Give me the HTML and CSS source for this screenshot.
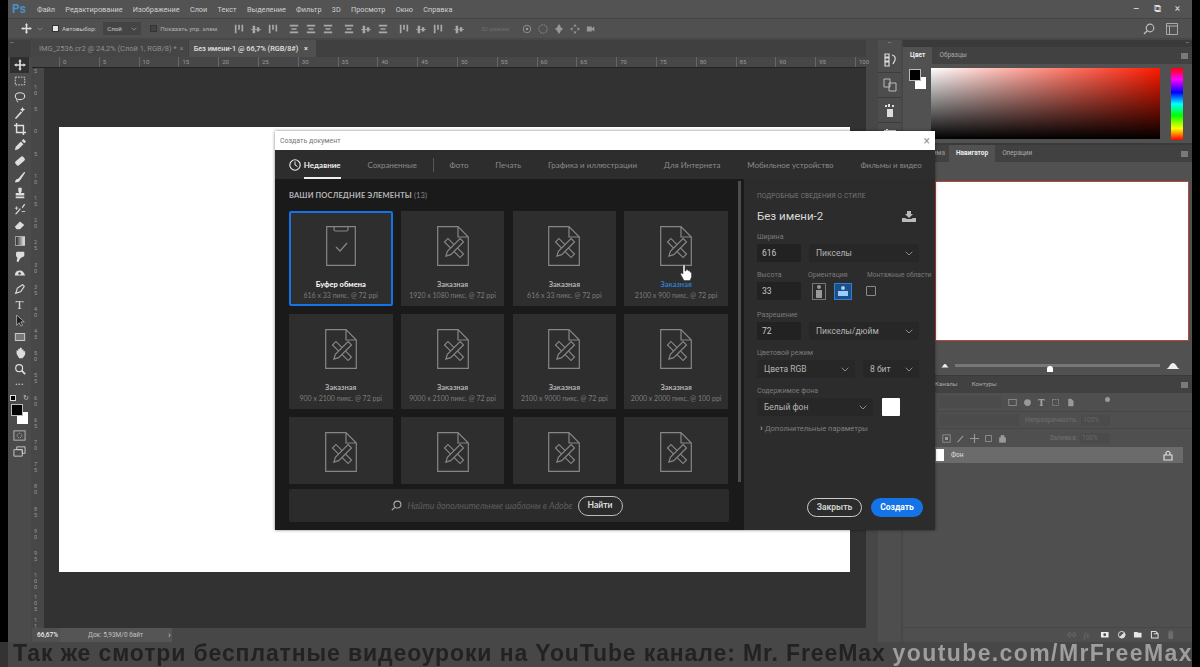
FILE: index.html
```html
<!DOCTYPE html>
<html lang="ru">
<head>
    <meta charset="UTF-8">
    <meta name="viewport" content="width=device-width, initial-scale=1.0">
    <title>Photoshop - Создать документ</title>
    <link rel="stylesheet" href="styles.css">
</head>
<body>
    <svg class="defs" width="0" height="0">
        <symbol id="file-x" viewBox="0 0 32 40">
            <path d="M.7.7H21L31.3 11V39.3H.7ZM21 .7V11H31.3" fill="none" stroke="currentColor" stroke-width="1.2"/>
            <g fill="none" stroke="currentColor" stroke-width="1.2">
                <rect x="14.6" y="11" width="4.8" height="22" transform="rotate(-45 17 22)"/>
                <path d="M14.6 11H19.4V29L17 33.5L14.6 29Z" transform="rotate(45 17 22)" fill="#2e2e2e"/>
            </g>
        </symbol>
        <symbol id="clip" viewBox="0 0 30 40">
            <path d="M.7.7H29.3V39.3H.7ZM8 .7V3.5Q8 5 9.5 5H20.5Q22 5 22 3.5V.7" fill="none" stroke="currentColor" stroke-width="1.2"/>
            <path d="M10 21L14 25L21 17" fill="none" stroke="currentColor" stroke-width="1.2"/>
        </symbol>
        <symbol id="chev" viewBox="0 0 8 5">
            <path d="M.7.7L4 4L7.3.7" fill="none" stroke="currentColor" stroke-width="1"/>
        </symbol>
        <symbol id="al-v" viewBox="0 0 12 12">
            <path d="M1 1H3V11H1ZM5 1H7V7H5ZM9 1H11V9H9Z" fill="currentColor"/>
        </symbol>
        <symbol id="al-h" viewBox="0 0 12 12">
            <path d="M1 1H11V3H1ZM3 5H9V7H3ZM1 9H11V11H1Z" fill="currentColor"/>
        </symbol>
        <symbol id="al-c" viewBox="0 0 12 12">
            <path d="M0 6H12V7H0ZM2 2H5V11H2ZM7 4H10V9H7Z" fill="currentColor"/>
        </symbol>
        <symbol id="mount" viewBox="0 0 14 7">
            <path d="M0 7Q2 7 4 3Q7-1 10 3Q12 7 14 7Z" fill="currentColor"/>
        </symbol>
    </svg>

    <div class="screen">
        <header class="menubar">
            <span class="ps-logo">Ps</span>
            <nav class="menu">
                <span>Файл</span><span>Редактирование</span><span>Изображение</span><span>Слои</span><span>Текст</span><span>Выделение</span><span>Фильтр</span><span>3D</span><span>Просмотр</span><span>Окно</span><span>Справка</span>
            </nav>
            <div class="win-ctrl">
                <span>&#8211;</span><span>&#10697;</span><span>&#215;</span>
            </div>
        </header>

        <div class="optbar">
            <svg class="opt-move" width="14" height="14" viewBox="0 0 14 14"><path d="M7 0L9 3H8V6H11V5L14 7L11 9V8H8V11H9L7 14L5 11H6V8H3V9L0 7L3 5V6H6V3H5Z" fill="#ddd"/></svg>
            <svg class="opt-chev"><use href="#chev"/></svg>
            <span class="check on"></span>
            <span class="opt-label">Автовыбор:</span>
            <span class="opt-select">Слой <svg class="opt-chev"><use href="#chev"/></svg></span>
            <span class="check"></span>
            <span class="opt-label dim">Показать упр. элем.</span>
            <div class="opt-icons first">
                <svg><use href="#al-v"/></svg><svg><use href="#al-c"/></svg><svg><use href="#al-v"/></svg>
            </div>
            <div class="opt-icons">
                <svg><use href="#al-h"/></svg><svg><use href="#al-h"/></svg><svg><use href="#al-h"/></svg>
            </div>
            <div class="opt-icons">
                <svg><use href="#al-h"/></svg><svg><use href="#al-c"/></svg><svg><use href="#al-h"/></svg>
            </div>
            <div class="opt-icons">
                <svg><use href="#al-v"/></svg><svg><use href="#al-c"/></svg><svg><use href="#al-v"/></svg>
            </div>
            <div class="opt-icons">
                <svg><use href="#al-c"/></svg>
            </div>
            <span class="opt-3d">3D-режим:</span>
            <div class="opt-icons three">
                <svg viewBox="0 0 12 12"><circle cx="6" cy="6" r="4.5" fill="none" stroke="currentColor"/><circle cx="6" cy="6" r="1.5" fill="currentColor"/></svg>
                <svg viewBox="0 0 12 12"><circle cx="6" cy="6" r="5" fill="none" stroke="currentColor" stroke-dasharray="2 1"/></svg>
                <svg viewBox="0 0 12 12"><path d="M6 0L8 3V9L6 12L4 9V3ZM1 6L4 4V8ZM11 6L8 4V8Z" fill="currentColor"/></svg>
                <svg viewBox="0 0 12 12"><path d="M6 0L8 3H4ZM6 12L4 9H8ZM0 6L3 4V8ZM12 6L9 4V8Z" fill="currentColor"/></svg>
                <svg viewBox="0 0 12 12"><path d="M1 3H7V9H1ZM7 5L10 3V9L7 7Z" fill="currentColor"/></svg>
            </div>
            <div class="opt-right">
                <svg width="12" height="12" viewBox="0 0 12 12"><circle cx="7" cy="5" r="3.8" fill="none" stroke="#bbb" stroke-width="1.2"/><path d="M4 8L1 11" stroke="#bbb" stroke-width="1.4"/></svg>
                <svg width="12" height="12" viewBox="0 0 12 12"><path d="M.5.5H11.5V11.5H.5ZM.5 3H11.5M3.5 3V11.5" fill="none" stroke="#aaa"/></svg>
            </div>
        </div>

        <div class="work">
            <aside class="tools">
                <div class="tools-top">&#8226;&#8226;</div>
                <div class="tool active"><svg viewBox="0 0 14 14"><path d="M7 0L9 3H8V6H11V5L14 7L11 9V8H8V11H9L7 14L5 11H6V8H3V9L0 7L3 5V6H6V3H5Z"/></svg></div>
                <div class="tool"><svg viewBox="0 0 14 14"><rect x="1.5" y="2.5" width="11" height="9" fill="none" stroke="#ddd" stroke-dasharray="2 1.2"/></svg></div>
                <div class="tool"><svg viewBox="0 0 14 14"><ellipse cx="7" cy="6" rx="5.5" ry="4" fill="none" stroke="#ddd" stroke-width="1.3"/><path d="M3 9Q3 13 5 13" fill="none" stroke="#ddd"/></svg></div>
                <div class="tool"><svg viewBox="0 0 14 14"><path d="M1 13L8 5L9.5 6.5L2.5 14Z"/><path d="M10 0L11 2L13 3L11 4L10 6L9 4L7 3L9 2Z"/></svg></div>
                <div class="tool"><svg viewBox="0 0 14 14"><path d="M3 0V11H14M0 3H11V14" fill="none" stroke="#ddd" stroke-width="1.7"/></svg></div>
                <div class="tool"><svg viewBox="0 0 14 14"><path d="M1 13L2 9L8 3L11 6L5 12Z"/><path d="M9 2L11 0L14 3L12 5Z"/></svg></div>
                <div class="tool"><svg viewBox="0 0 14 14"><rect x="1" y="4" width="12" height="6" rx="2" transform="rotate(-40 7 7)"/></svg></div>
                <div class="tool"><svg viewBox="0 0 14 14"><path d="M1 13Q2 9 5 9L12 1L13 2L7 11Q5 14 1 13Z"/></svg></div>
                <div class="tool"><svg viewBox="0 0 14 14"><path d="M5 1H9V5L8 7H12V10H2V7H6L5 5ZM2 11H12V13H2Z"/></svg></div>
                <div class="tool"><svg viewBox="0 0 14 14"><path d="M1 13L7 6L8 7L3 13ZM9 5L12 1L13 2L10 6Z"/><path d="M1 6H5M3 4V8M9 10H13" stroke="#ddd"/></svg></div>
                <div class="tool"><svg viewBox="0 0 14 14"><path d="M1 9L7 3L12 7L7 12H3Z"/></svg></div>
                <div class="tool"><svg viewBox="0 0 14 14"><defs><linearGradient id="grad-t"><stop offset="0" stop-color="#222"/><stop offset="1" stop-color="#eee"/></linearGradient></defs><rect x="1.5" y="2" width="11" height="10" fill="url(#grad-t)" stroke="#ddd" stroke-width=".7"/></svg></div>
                <div class="tool"><svg viewBox="0 0 14 14"><path d="M3 1H12V6Q9 7 7 9L5 13L3 12L4 8Q1 6 3 1Z"/></svg></div>
                <div class="tool"><svg viewBox="0 0 14 14"><path d="M1 10Q1 4 7 4Q11 4 13 10Z"/><circle cx="6.5" cy="7.5" r="1.5" fill="#4a4a4a"/></svg></div>
                <div class="tool"><svg viewBox="0 0 14 14"><path d="M2 12L4 6L10 2L12 4L8 10Z" fill="none" stroke="#ddd" stroke-width="1.3"/></svg></div>
                <div class="tool tool-t">T</div>
                <div class="tool"><svg viewBox="0 0 14 14"><path d="M3 0V12L6 9L8 13L10 12L8 8H12Z" fill="#1d1d1d" stroke="#ddd" stroke-width=".7"/></svg></div>
                <div class="tool"><svg viewBox="0 0 14 14"><rect x="1.5" y="3" width="11" height="8" fill="#777" stroke="#ddd"/></svg></div>
                <div class="tool"><svg viewBox="0 0 14 14"><path d="M3 8V4H5V2H7V1H9V3H11V5H13V9L10 13H6Z"/></svg></div>
                <div class="tool"><svg viewBox="0 0 14 14"><circle cx="6" cy="6" r="4" fill="none" stroke="#ddd" stroke-width="1.4"/><path d="M9 9L13 13" stroke="#ddd" stroke-width="2"/></svg></div>
                <div class="tool tool-dots">&#8226;&#8226;&#8226;</div>
                <div class="swatch-mini"><i></i><b>&#8635;</b></div>
                <div class="swatch-big"><span class="bg"></span><span class="fg"></span></div>
                <div class="tool low"><svg viewBox="0 0 14 14"><rect x="1" y="2" width="12" height="10" fill="none" stroke="#bbb"/><circle cx="7" cy="7" r="2.5" fill="none" stroke="#bbb" stroke-dasharray="1 1"/></svg></div>
                <div class="tool low"><svg viewBox="0 0 14 14"><path d="M4 2H13V9H10V5H4ZM1 5H10V12H1Z" fill="none" stroke="#ccc"/></svg></div>
            </aside>

            <main class="docs">
                <div class="tabs">
                    <span class="tab">IMG_2536.cr2 @ 24,2% (Слой 1, RGB/8) * <i>&#215;</i></span>
                    <span class="tab cur">Без имени-1 @ 66,7% (RGB/8#) <i>&#215;</i></span>
                </div>
                <div class="ruler-top">
                    <span>0</span><span>5</span><span>10</span><span>15</span><span>20</span><span>25</span><span>30</span><span>35</span><span>40</span><span>45</span><span>50</span><span>55</span><span>60</span><span>65</span><span>70</span><span>75</span><span>80</span><span>85</span><span>90</span><span>95</span><span>100</span>
                </div>
                <div class="doc-row">
                    <div class="ruler-left">
                        <span>5</span><span>10</span><span>5</span><span>0</span><span>5</span><span>10</span><span>15</span><span>20</span><span>25</span><span>30</span><span>35</span><span>40</span><span>45</span><span>50</span><span>55</span><span>60</span><span>65</span><span>70</span><span>75</span><span>80</span><span>85</span><span>90</span><span>95</span><span>100</span><span>105</span><span>11</span>
                    </div>
                    <div class="canvas">
                        <div class="page"></div>
                    </div>
                </div>
                <footer class="status">
                    <span class="zoom-val">66,67%</span>
                    <span class="doc-size">Док: 5,93М/0 байт</span>
                    <span class="status-arrow">&#8250;</span>
                </footer>
            </main>

            <aside class="dock">
                <div class="dock-top">&#8226;&#8226;</div>
                <div class="dock-item"><svg viewBox="0 0 14 14"><path d="M2 1H6V4H2ZM2 5H6V8H2ZM2 9H6V13H2ZM9 2Q13 3 12 7L10 11" fill="none" stroke="#ddd" stroke-width="1.2"/></svg></div>
                <div class="dock-item"><svg viewBox="0 0 14 14"><path d="M1 1H7V9H1ZM6 5H13V13H6Z" fill="none" stroke="#bbb"/></svg></div>
                <div class="dock-item"><svg viewBox="0 0 14 14"><path d="M4 6H10V14H4ZM5 1H7V4H5ZM9 2H11V4H9ZM2 2H4V4H2Z" fill="#ddd"/></svg></div>
                <div class="dock-item"><svg viewBox="0 0 14 14"><path d="M1 2H13V3H1ZM3 1H5V4H3ZM2 7H12V13H2Z" fill="#ddd"/></svg></div>
            </aside>

            <aside class="panels">
                <div class="panels-top">&#8226;&#8226;</div>
                <section class="panel color-panel">
                    <div class="panel-tabs">
                        <span class="ptab cur">Цвет</span><span class="ptab">Образцы</span>
                        <span class="pmenu"></span>
                    </div>
                    <div class="color-body">
                        <div class="color-sw"><span class="bg"></span><span class="fg"></span></div>
                        <div class="color-field"></div>
                        <div class="color-hue"></div>
                    </div>
                </section>
                <section class="panel nav-panel">
                    <div class="panel-tabs">
                        <span class="ptab nav-skip">Гистограмма</span><span class="ptab cur">Навигатор</span><span class="ptab">Операции</span>
                        <span class="pmenu"></span>
                    </div>
                    <div class="nav-body">
                        <div class="nav-preview"></div>
                        <div class="nav-zoom">
                            <svg class="m-s"><use href="#mount"/></svg>
                            <div class="nav-track"><span class="nav-knob"></span></div>
                            <svg class="m-l"><use href="#mount"/></svg>
                        </div>
                    </div>
                </section>
                <section class="panel layers-panel">
                    <div class="panel-tabs layer-tabs">
                        <span class="ptab nav-skip">Слои</span><span class="ptab">Каналы</span><span class="ptab">Контуры</span>
                        <span class="pmenu"></span>
                    </div>
                    <div class="layer-row filter">
                        <span class="l-field wide"></span>
                        <svg viewBox="0 0 12 12"><rect x="1" y="2" width="10" height="8" fill="none" stroke="#999"/></svg>
                        <svg viewBox="0 0 12 12"><circle cx="6" cy="6" r="4.5" fill="#999"/></svg>
                        <span class="l-t">T</span>
                        <svg viewBox="0 0 12 12"><rect x="2" y="2" width="8" height="8" fill="none" stroke="#999" stroke-dasharray="2 1"/></svg>
                        <svg viewBox="0 0 12 12"><path d="M3 1H7L10 4V11H3Z" fill="#999"/></svg>
                        <span class="l-dot"></span>
                    </div>
                    <div class="layer-row blend">
                        <span class="l-field wide2"></span>
                        <span class="l-label push">Непрозрачность:</span><span class="l-val">100%</span>
                    </div>
                    <div class="layer-row lock">
                        <svg viewBox="0 0 12 12"><path d="M1 1H11V11H1Z" fill="none" stroke="#999"/><path d="M4 4H8V8H4Z" fill="#999"/></svg>
                        <svg viewBox="0 0 12 12"><path d="M1 11L9 2L10 3L3 11Z" fill="#999"/></svg>
                        <svg viewBox="0 0 12 12"><path d="M6 0V12M0 6H12" stroke="#999" stroke-width="1.5"/></svg>
                        <svg viewBox="0 0 12 12"><path d="M2 2H10V10H2Z" fill="none" stroke="#999"/></svg>
                        <svg viewBox="0 0 12 12"><path d="M2 5H10V11H2ZM4 5V2H8V5" fill="#999" stroke="#999"/></svg>
                        <span class="l-label push">Заливка:</span><span class="l-val">100%</span>
                    </div>
                    <div class="layer-item">
                        <span class="l-thumb"></span>
                        <span class="l-name">Фон</span>
                        <svg width="10" height="11" viewBox="0 0 10 11"><path d="M1 5H9V10H1ZM3 5V2.5Q5 0 7 2.5V5" fill="none" stroke="#ddd" stroke-width="1.2"/></svg>
                    </div>
                    <div class="layer-fill"></div>
                    <div class="layer-foot">
                        <svg viewBox="0 0 10 10"><path d="M4 3H2.5Q1 3 1 5T2.5 7H4M6 3H7.5Q9 3 9 5T7.5 7H6M3 5H7" fill="none" stroke="#6e6e6e"/></svg>
                        <span class="fx">fx</span>
                        <svg viewBox="0 0 10 10"><path fill-rule="evenodd" d="M1 2H9V8H1ZM5 3.5A1.5 1.5 0 1 0 5 6.5A1.5 1.5 0 1 0 5 3.5Z" fill="#eee"/></svg>
                        <svg viewBox="0 0 10 10"><circle cx="5" cy="5" r="3.5" fill="none" stroke="#ddd"/><path d="M5 1.5A3.5 3.5 0 0 1 5 8.5Z" fill="#ddd" transform="rotate(45 5 5)"/></svg>
                        <svg viewBox="0 0 10 10"><path d="M1 2H4.5L5.5 3H9V8H1Z" fill="#e6e6e6"/></svg>
                        <svg viewBox="0 0 10 10"><path d="M1.5 1.5H6L8.5 4V8.5H1.5Z M4 4L8.5 4" fill="none" stroke="#ddd" stroke-width="1.1"/></svg>
                        <svg viewBox="0 0 10 10"><path d="M3 3H7V9H3ZM2 2H8M4 1H6" fill="#6e6e6e" stroke="#6e6e6e"/></svg>
                    </div>
                </section>
            </aside>
        </div>

        <!-- диалог лежит поверх рабочей области -->
        <div class="dialog">
            <div class="dlg-title">
                <span>Создать документ</span>
                <i>&#215;</i>
            </div>
            <nav class="dlg-tabs">
                <svg width="12" height="12" viewBox="0 0 12 12"><circle cx="6" cy="6" r="5.2" fill="none" stroke="#eee" stroke-width="1.1"/><path d="M6 2.5V6L8.5 7.5" fill="none" stroke="#eee"/></svg>
                <span class="dtab cur">Недавние</span>
                <span class="dtab saved">Сохраненные</span>
                <span class="dtab-sep"></span>
                <span class="dtab">Фото</span>
                <span class="dtab">Печать</span>
                <span class="dtab">Графика и иллюстрации</span>
                <span class="dtab">Для Интернета</span>
                <span class="dtab">Мобильное устройство</span>
                <span class="dtab">Фильмы и видео</span>
            </nav>
            <div class="dlg-body">
                <div class="recent">
                    <h2 class="recent-head">ВАШИ ПОСЛЕДНИЕ ЭЛЕМЕНТЫ <span>(13)</span></h2>
                    <div class="cards">
                        <div class="card sel"><svg class="ic-clip"><use href="#clip"/></svg><b>Буфер обмена</b><small>616 x 33 пикс. @ 72 ppi</small></div>
                        <div class="card"><svg class="ic"><use href="#file-x"/></svg><b>Заказная</b><small>1920 x 1080 пикс. @ 72 ppi</small></div>
                        <div class="card"><svg class="ic"><use href="#file-x"/></svg><b>Заказная</b><small>616 x 33 пикс. @ 72 ppi</small></div>
                        <div class="card hover"><svg class="ic"><use href="#file-x"/></svg><b>Заказная</b><small>2100 x 900 пикс. @ 72 ppi</small></div>
                        <div class="card"><svg class="ic"><use href="#file-x"/></svg><b>Заказная</b><small>900 x 2100 пикс. @ 72 ppi</small></div>
                        <div class="card"><svg class="ic"><use href="#file-x"/></svg><b>Заказная</b><small>9000 x 2100 пикс. @ 72 ppi</small></div>
                        <div class="card"><svg class="ic"><use href="#file-x"/></svg><b>Заказная</b><small>2100 x 9000 пикс. @ 72 ppi</small></div>
                        <div class="card"><svg class="ic"><use href="#file-x"/></svg><b>Заказная</b><small>2000 x 2000 пикс. @ 100 ppi</small></div>
                        <div class="card"><svg class="ic"><use href="#file-x"/></svg></div>
                        <div class="card"><svg class="ic"><use href="#file-x"/></svg></div>
                        <div class="card"><svg class="ic"><use href="#file-x"/></svg></div>
                        <div class="card"><svg class="ic"><use href="#file-x"/></svg></div>
                    </div>
                    <div class="search">
                        <svg width="11" height="11" viewBox="0 0 12 12"><circle cx="7" cy="5" r="3.8" fill="none" stroke="#aaa" stroke-width="1.2"/><path d="M4 8L1 11" stroke="#aaa" stroke-width="1.4"/></svg>
                        <em>Найти дополнительные шаблоны в Adobe</em>
                        <span class="search-btn">Найти</span>
                    </div>
                    <span class="scroll"></span>
                </div>
                <div class="details">
                    <div class="det-head">ПОДРОБНЫЕ СВЕДЕНИЯ О СТИЛЕ</div>
                    <div class="det-name">
                        <span>Без имени-2</span>
                        <svg width="14" height="11" viewBox="0 0 14 11"><path d="M5 0H9V3H11L7 7L3 3H5ZM0 7H3L5 8H9L11 7H14V11H0Z" fill="#bbb"/></svg>
                    </div>
                    <label class="f-label">Ширина</label>
                    <div class="f-row">
                        <span class="f-input">616</span>
                        <span class="f-select grow">Пикселы <svg><use href="#chev"/></svg></span>
                    </div>
                    <div class="f-labels">
                        <label class="f-label l1">Высота</label>
                        <label class="f-label l2">Ориентация</label>
                        <label class="f-label l3">Монтажные области</label>
                    </div>
                    <div class="f-row">
                        <span class="f-input">33</span>
                        <span class="orient por"><svg width="10" height="15" viewBox="0 0 10 15"><circle cx="5" cy="3" r="2" fill="#999"/><path d="M2 6H8V14H2Z" fill="#999"/></svg></span>
                        <span class="orient land"><svg width="12" height="12" viewBox="0 0 12 12"><circle cx="6" cy="3" r="2" fill="#9ccbff"/><path d="M1 6H11V11H1Z" fill="#9ccbff"/></svg></span>
                        <span class="f-check"></span>
                    </div>
                    <label class="f-label">Разрешение</label>
                    <div class="f-row">
                        <span class="f-input">72</span>
                        <span class="f-select grow">Пикселы/дюйм <svg><use href="#chev"/></svg></span>
                    </div>
                    <label class="f-label tight">Цветовой режим</label>
                    <div class="f-row">
                        <span class="f-select mode">Цвета RGB <svg><use href="#chev"/></svg></span>
                        <span class="f-select grow">8 бит <svg><use href="#chev"/></svg></span>
                    </div>
                    <label class="f-label tight">Содержимое фона</label>
                    <div class="f-row">
                        <span class="f-select bgsel">Белый фон <svg><use href="#chev"/></svg></span>
                        <span class="f-white"></span>
                    </div>
                    <div class="more">&#8250; <span>Дополнительные параметры</span></div>
                    <div class="det-btns">
                        <span class="btn ghost">Закрыть</span>
                        <span class="btn blue">Создать</span>
                    </div>
                </div>
            </div>
            <svg class="hand" width="12" height="17" viewBox="0 0 12 17"><path d="M3 1Q4 0 5 1V7H6V6Q7 5 8 6V7Q9 6 10 7V8Q11 8 11.5 9V13L10 16.5H4L1 11Q0 9 2 9L3 10Z" fill="#fff" stroke="#333" stroke-width=".5"/></svg>
        </div>

        <div class="caption">
            <span class="cap-dark">Так же смотри бесплатные видеоуроки на YouTube канале: Mr. FreeMax</span>
            <span class="cap-light">youtube.com/MrFreeMax</span>
        </div>
    </div>
</body>
</html>
```

FILE: styles.css
```css
* {
    box-sizing: border-box;
}

html, body {
    margin: 0;
    height: 100%;
    background: #000;
    overflow: hidden;
}

.defs {
    position: absolute;
}

.screen {
    position: relative;
    width: 1200px;
    height: 667px;
    display: flex;
    flex-direction: column;
    font-family: "Roboto", "Liberation Sans", sans-serif;
    font-size: 8px;
    color: #c8c8c8;
    filter: blur(.5px);
}

/* menu */
.menubar {
    height: 18px;
    margin: 0 8px;
    padding-left: 4px;
    display: flex;
    align-items: center;
    background: #535353;
    flex-shrink: 0;
}

.ps-logo {
    width: 25px;
    font-size: 12px;
    font-weight: 700;
    color: #4a90c8;
}

.menu {
    display: flex;
    gap: 10.3px;
    font-size: 7.3px;
    color: #d0d0d0;
}

.win-ctrl {
    margin-left: auto;
    display: flex;
    gap: 14px;
    padding-right: 12px;
    font-size: 10px;
    color: #ddd;
}

/* options */
.optbar {
    height: 20px;
    margin: 0 8px;
    padding-left: 13px;
    display: flex;
    align-items: center;
    background: #505050;
    border-top: 1px solid #444;
    flex-shrink: 0;
}

.opt-move {
    width: 11px;
    height: 11px;
}

.opt-chev {
    width: 6px;
    height: 4px;
    margin-left: 5px;
    color: #999;
}

.check {
    width: 7px;
    height: 7px;
    margin-left: 9px;
    border: 1px solid #333;
    background: #434343;
}

.check.on {
    background: #e6e6e6;
}

.opt-label {
    margin-left: 3px;
    font-size: 6.2px;
    color: #c8c8c8;
}

.opt-label.dim {
    color: #b0b0b0;
}

.opt-select {
    width: 38px;
    height: 13px;
    margin-left: 7px;
    padding: 0 4px;
    display: flex;
    align-items: center;
    justify-content: space-between;
    background: #444;
    font-size: 6.2px;
}

.opt-icons {
    display: flex;
    gap: 7px;
    margin-left: 11px;
    color: #a8a8a8;
}

.opt-icons.first {
    margin-left: 15px;
}

.opt-icons svg {
    width: 10px;
    height: 10px;
}

.opt-3d {
    margin-left: 17px;
    font-size: 6px;
    color: #6d6d6d;
}

.opt-icons.three {
    margin-left: 12px;
    gap: 6px;
    color: #989898;
}

.opt-right {
    margin-left: auto;
    display: flex;
    gap: 11px;
    padding-right: 14px;
}

/* work area */
.work {
    flex: 1;
    min-height: 0;
    margin: 0 8px;
    padding-top: 2px;
    display: flex;
    background: #474747;
}

.tools {
    width: 23px;
    margin-right: 1px;
    background: #4b4b4b;
    display: flex;
    flex-direction: column;
    align-items: center;
    height: 602px;
    flex-shrink: 0;
}

.tools-top {
    height: 17px;
    font-size: 5px;
    width: 100%;
    padding-left: 2px;
    background: #404040;
    color: #999;
}

.tool {
    width: 19px;
    height: 16px;
    display: flex;
    align-items: center;
    justify-content: center;
}

.tool svg {
    width: 12px;
    height: 12px;
    fill: #ddd;
}

.tool.active {
    background: #2f2f2f;
}

.tool.low svg {
    width: 13px;
    height: 13px;
}

.tool-t {
    font-family: "Liberation Serif", serif;
    font-size: 13px;
    color: #ddd;
}

.tool-dots {
    font-size: 7px;
    letter-spacing: .5px;
}

.swatch-mini {
    width: 19px;
    height: 10px;
    display: flex;
    justify-content: space-between;
    align-items: center;
    font-size: 7px;
}

.swatch-mini i {
    width: 6px;
    height: 6px;
    background: #000;
    border: 1px solid #ddd;
}

.swatch-mini b {
    font-weight: 400;
}

.swatch-big {
    position: relative;
    width: 19px;
    height: 22px;
    flex-shrink: 0;
    margin-bottom: 2px;
}

.swatch-big .fg,
.color-sw .fg {
    position: absolute;
    left: 1px;
    top: 1px;
    width: 12px;
    height: 12px;
    background: #000;
    border: 1px solid #bbb;
}

.swatch-big .bg,
.color-sw .bg {
    position: absolute;
    left: 7px;
    top: 9px;
    width: 11px;
    height: 12px;
    background: #fff;
}

/* document */
.docs {
    width: 834px;
    display: flex;
    flex-direction: column;
    flex-shrink: 0;
}

.tabs {
    height: 17px;
    display: flex;
    background: #404040;
    flex-shrink: 0;
}

.tab {
    height: 17px;
    padding: 0 4px 0 7px;
    line-height: 17px;
    font-size: 7.5px;
    color: #8f8f8f;
    background: #454545;
    white-space: nowrap;
    margin-right: 1px;
}

.tab i {
    font-style: normal;
    margin-left: 1px;
}

.tab.cur {
    padding: 0 8px 0 5px;
    background: #505050;
    color: #e0e0e0;
    font-size: 7.3px;
    font-weight: 500;
}

.tab.cur i {
    margin-left: 4px;
}

.ruler-top {
    height: 11px;
    padding-left: 27px;
    display: flex;
    background: #474747;
    border-bottom: 1px solid #222;
    flex-shrink: 0;
}

.ruler-top span {
    width: 39.8px;
    padding-left: 3px;
    font-size: 6px;
    line-height: 9px;
    color: #999;
    border-left: 1px solid #666;
    flex-shrink: 0;
}

.doc-row {
    flex: 1;
    min-height: 0;
    display: flex;
}

.ruler-left {
    width: 12px;
    background: #474747;
    overflow: hidden;
    flex-shrink: 0;
}

.ruler-left span {
    display: block;
    width: 5px;
    height: 22.2px;
    margin-left: 2px;
    font-size: 5.5px;
    line-height: 6px;
    color: #999;
    word-break: break-all;
}

.ruler-left span:first-child {
    height: 16px;
}

.ruler-left span:last-child {
    height: 12px;
}

.canvas {
    flex: 1;
    padding: 59px 16px 56px 15px;
    background: #323232;
}

.page {
    height: 100%;
    background: #fff;
}

.status {
    height: 14px;
    display: flex;
    align-items: center;
    font-size: 6.5px;
    line-height: 10px;
    flex-shrink: 0;
}

.zoom-val {
    width: 28px;
    height: 14px;
    line-height: 14px;
    padding-left: 5px;
    background: #505050;
    color: #eee;
    font-weight: 500;
}

.doc-size {
    width: 112px;
    height: 14px;
    line-height: 14px;
    padding-left: 28px;
    background: #555;
    color: #c0c0c0;
}

.status-arrow {
    margin-left: -4px;
    font-size: 9px;
    line-height: 9px;
    color: #c0c0c0;
}

/* docks */
.dock {
    width: 23px;
    margin-left: 12px;
    background: #4e4e4e;
    flex-shrink: 0;
}

.dock-top {
    height: 8px;
    font-size: 5px;
    line-height: 6px;
    text-align: center;
    color: #999;
}

.dock-item {
    height: 25px;
    display: flex;
    align-items: center;
    justify-content: center;
    background: #4d4d4d;
    border-bottom: 1px solid #3c3c3c;
}

.dock-item svg {
    width: 14px;
    height: 14px;
}

.panels {
    flex: 1;
    min-width: 0;
    margin-left: 2px;
    display: flex;
    flex-direction: column;
    background: #3a3a3a;
}

.panels-top {
    height: 7px;
    font-size: 5px;
    line-height: 6px;
    text-align: right;
    padding-right: 3px;
    color: #999;
}

.panel-tabs {
    height: 17px;
    display: flex;
    align-items: stretch;
    background: #414141;
    font-size: 6.5px;
    flex-shrink: 0;
}

.ptab {
    padding: 0 7px;
    line-height: 17px;
    color: #aaa;
}

.ptab.cur {
    background: #515151;
    color: #eee;
    font-weight: 700;
}

.pmenu {
    width: 7px;
    height: 6px;
    margin: 6px 4px 0 auto;
    background: #7a7a7a;
}

.color-body {
    height: 79px;
    padding: 4px 9px 4px 5px;
    display: flex;
    background: #515151;
}

.color-sw {
    position: relative;
    width: 23px;
    flex-shrink: 0;
}

.color-field {
    width: 229px;
    height: 71px;
    background: linear-gradient(to top, #000, rgba(0, 0, 0, 0)), linear-gradient(to right, #fff, #ff1a00);
}

.color-hue {
    width: 12px;
    height: 72px;
    margin-left: 11px;
    background: linear-gradient(to bottom, #f00 0, #f0f 16%, #00f 34%, #0ff 50%, #0f0 66%, #ff0 84%, #f00 100%);
}

.nav-panel {
    margin-top: 2px;
}

.nav-skip {
    width: 46px;
    padding: 0 0 0 2px;
    color: #999;
    white-space: nowrap;
}

.nav-body {
    height: 213px;
    background: #515151;
    padding: 19px 3px 0 32px;
}

.nav-preview {
    height: 160px;
    background: #fff;
    border: 1px solid #b5463a;
}

.nav-zoom {
    margin-top: 21px;
    margin-left: 6px;
    display: flex;
    align-items: center;
    gap: 6px;
    color: #eee;
}

.m-s {
    width: 8px;
    height: 5px;
}

.m-l {
    width: 14px;
    height: 7px;
}

.nav-track {
    position: relative;
    width: 205px;
    height: 3px;
    background: #777;
}

.nav-knob {
    position: absolute;
    left: 92px;
    top: 2px;
    width: 6px;
    height: 6px;
    background: #fff;
    border-radius: 3px 3px 0 0;
}

.layers-panel {
    flex: 1;
    min-height: 0;
    display: flex;
    flex-direction: column;
    background: #4f4f4f;
    margin-top: 1px;
}

.layer-tabs {
    font-size: 6.2px;
}

.layer-tabs .nav-skip {
    width: 25px;
}

.layer-row {
    display: flex;
    align-items: center;
    gap: 6px;
    color: #6f6f6f;
    font-size: 6.5px;
}

.layer-row svg {
    width: 9px;
    height: 9px;
    flex-shrink: 0;
}

.layer-row.filter {
    height: 19px;
    padding-left: 36px;
    border-bottom: 1px solid #474747;
}

.l-field {
    height: 12px;
    background: #4b4b4b;
}

.l-field.wide {
    width: 62px;
    margin-right: 1px;
}

.l-t {
    font-family: "Liberation Serif", serif;
    font-size: 10px;
    line-height: 11px;
    font-weight: 700;
    color: #aaa;
}

.l-dot {
    width: 5px;
    height: 5px;
    border-radius: 50%;
    background: #999;
    margin: -5px 0 0 24px;
}

.layer-row.blend {
    height: 17px;
    padding: 0 82px 0 36px;
    border-bottom: 1px solid #474747;
}

.l-field.wide2 {
    width: 84px;
}

.l-val {
    width: 30px;
    height: 11px;
    line-height: 11px;
    padding-left: 2px;
    margin-left: -2px;
    background: #4b4b4b;
    color: #666;
}

.layer-row.lock {
    height: 18px;
    gap: 5px;
    padding: 0 82px 0 39px;
}

.push {
    margin-left: auto;
}

.layer-item {
    height: 16px;
    margin-right: 9px;
    padding-left: 33px;
    display: flex;
    align-items: center;
    background: #6b6b6b;
    color: #e0e0e0;
    font-size: 6.5px;
}

.l-thumb {
    width: 8px;
    height: 12px;
    background: #fff;
    margin-right: 7px;
}

.l-name {
    flex: 1;
}

.layer-item svg {
    margin-right: 10px;
}

.layer-fill {
    flex: 1;
}

.layer-foot {
    height: 15px;
    padding-left: 164px;
    display: flex;
    align-items: center;
    gap: 7px;
    border-top: 1px solid #474747;
}

.layer-foot svg {
    width: 9.5px;
    height: 9.5px;
    flex-shrink: 0;
}

.fx {
    width: 9.5px;
    font-family: "Liberation Serif", serif;
    font-style: italic;
    font-size: 8px;
    line-height: 9px;
    color: #6e6e6e;
}

/* dialog */
.dialog {
    position: absolute;
    left: 275px;
    top: 131px;
    width: 660px;
    height: 399px;
    display: flex;
    flex-direction: column;
    background: #1a1a1a;
    font-family: "Lato", "Open Sans", sans-serif;
    box-shadow: 0 0 3px rgba(0, 0, 0, .5);
}

.dlg-title {
    height: 19px;
    padding: 0 5px;
    display: flex;
    align-items: center;
    justify-content: space-between;
    background: #fff;
    color: #777;
    font-family: "Roboto", sans-serif;
    font-size: 7px;
    flex-shrink: 0;
}

.dlg-title i {
    font-style: normal;
    font-size: 12px;
    color: #999;
}

.dlg-tabs {
    height: 29px;
    padding-left: 14px;
    display: flex;
    align-items: center;
    gap: 26.8px;
    background: #2d2d2d;
    font-size: 7.97px;
    color: #8a8a8a;
    flex-shrink: 0;
}

.dlg-tabs svg {
    flex-shrink: 0;
}

.dtab {
    white-space: nowrap;
}

.dtab.cur {
    position: relative;
    margin-left: -24px;
    color: #eee;
    font-weight: 700;
}

.dtab.cur::after {
    content: "";
    position: absolute;
    left: 0;
    right: 0;
    top: 17px;
    height: 2px;
    background: #eee;
}

.dtab-sep {
    width: 1px;
    height: 14px;
    margin: 0 -11px;
    background: #555;
}

.dlg-body {
    flex: 1;
    min-height: 0;
    display: flex;
}

.recent {
    position: relative;
    width: 469px;
    padding: 0 14px;
    flex-shrink: 0;
}

.recent-head {
    margin: 0;
    height: 32px;
    padding-top: 12px;
    font-size: 7.5px;
    font-weight: 700;
    color: #b5b5b5;
    letter-spacing: .15px;
}

.recent-head span {
    font-weight: 400;
    color: #888;
}

.cards {
    width: 440px;
    height: 273px;
    overflow: hidden;
    display: grid;
    grid-template-columns: repeat(4, 103.5px);
    grid-auto-rows: 95px;
    gap: 8px 8.3px;
}

.card {
    padding-top: 15px;
    display: flex;
    flex-direction: column;
    align-items: center;
    background: #2e2e2e;
    color: #868686;
}

.card .ic {
    width: 32px;
    height: 40px;
    flex-shrink: 0;
}

.card .ic-clip {
    width: 30px;
    height: 40px;
    flex-shrink: 0;
}

.card b {
    margin-top: 14px;
    font-size: 7.5px;
    line-height: 9px;
    font-weight: 700;
    color: #b4b4b4;
}

.card small {
    margin-top: 2px;
    font-size: 7px;
    line-height: 9px;
    color: #7c7c7c;
}

.card.sel {
    padding-top: 13px;
    border: 2px solid #1473e6;
    border-radius: 2px;
}

.card.sel b {
    color: #fff;
}

.card.hover b {
    color: #2d7fd0;
}

.search {
    width: 440px;
    height: 33px;
    margin-top: 5px;
    padding-right: 4px;
    display: flex;
    align-items: center;
    justify-content: center;
    gap: 5px;
    background: #2b2b2b;
    border-radius: 2px;
}

.search em {
    font-size: 8.8px;
    color: #5e5e5e;
}

.search-btn {
    width: 45px;
    height: 20px;
    line-height: 17px;
    text-align: center;
    border: 1.5px solid #bbb;
    border-radius: 10px;
    color: #ddd;
    font-size: 8.5px;
    font-weight: 700;
}

.scroll {
    position: absolute;
    left: 463px;
    top: 2px;
    width: 3px;
    height: 301px;
    background: #4d4d4d;
}

.details {
    flex: 1;
    min-width: 0;
    position: relative;
    padding: 13px 12px 0 13px;
    background: #2c2c2c;
    font-family: "Roboto", sans-serif;
}

.det-head {
    height: 12px;
    font-size: 6.5px;
    line-height: 9px;
    color: #777;
    letter-spacing: .15px;
    white-space: nowrap;
}

.det-name {
    height: 24px;
    margin-bottom: 4px;
    padding-right: 7px;
    display: flex;
    align-items: center;
    justify-content: space-between;
    font-size: 11.5px;
    color: #d8d8d8;
}

.f-label {
    display: block;
    height: 12px;
    font-size: 7px;
    line-height: 11px;
    color: #7b7b7b;
    white-space: nowrap;
}

.f-labels {
    display: flex;
    margin-top: 8px;
}

.f-labels .l1 {
    width: 51px;
    flex-shrink: 0;
}

.f-labels .l2 {
    width: 59px;
    flex-shrink: 0;
}

.f-labels .l3 {
    font-size: 6.6px;
}

.f-row {
    height: 18px;
    display: flex;
    align-items: center;
    gap: 8px;
}

.f-row + .f-label {
    margin-top: 10px;
}

.f-row + .f-label.tight {
    margin-top: 8px;
}

.f-input {
    width: 44px;
    height: 18px;
    line-height: 19px;
    padding-left: 5px;
    background: #222;
    font-size: 8.5px;
    color: #c8c8c8;
}

.f-select {
    height: 18px;
    padding: 0 6px 0 7px;
    display: flex;
    align-items: center;
    justify-content: space-between;
    background: #272727;
    font-size: 8.5px;
    color: #b5b5b5;
}

.f-select svg {
    width: 8px;
    height: 5px;
    color: #8a8a8a;
}

.grow {
    flex: 1;
    margin-right: 4px;
}

.f-select.mode {
    width: 98px;
    flex-shrink: 0;
}

.f-select.bgsel {
    width: 116px;
    flex-shrink: 0;
}

.orient {
    height: 17px;
    display: flex;
    align-items: center;
    justify-content: center;
}

.orient.por {
    width: 14px;
    margin-left: 3px;
    border: 1px solid #777;
}

.orient.land {
    width: 18px;
    border: 1.5px solid #2d7fd8;
    background: #1c4f86;
}

.f-check {
    width: 10px;
    height: 10px;
    margin-left: 6px;
    border: 1px solid #8a8a8a;
    border-radius: 1px;
}

.f-white {
    width: 18px;
    height: 18px;
    margin-left: 1px;
    background: #fff;
    border-radius: 1px;
}

.more {
    margin-top: 7px;
    padding-left: 3px;
    font-size: 9px;
    color: #bbb;
}

.more span {
    font-size: 7.5px;
    color: #7f7f7f;
}

.det-btns {
    position: absolute;
    right: 12px;
    top: 319px;
    display: flex;
    gap: 9px;
}

.btn {
    height: 19px;
    line-height: 16px;
    text-align: center;
    border-radius: 10px;
    font-size: 8.5px;
    font-weight: 700;
}

.btn.ghost {
    width: 55px;
    border: 1.5px solid #ccc;
    color: #ccc;
}

.btn.blue {
    width: 52px;
    line-height: 19px;
    background: #1473e6;
    color: #fff;
}

.hand {
    position: absolute;
    left: 405px;
    top: 133px;
}

/* caption */
.caption {
    height: 25px;
    margin-right: 8px;
    padding: 0 0 2px 5px;
    display: flex;
    align-items: center;
    gap: 7px;
    background: #474747;
    border-left: 8px solid #333;
    font-family: "Liberation Sans", "Open Sans", sans-serif;
    font-weight: 700;
    font-size: 23px;
    line-height: 23px;
    white-space: nowrap;
    flex-shrink: 0;
}

.cap-dark {
    color: #222;
    letter-spacing: .88px;
}

.cap-light {
    color: #9e9e9e;
    letter-spacing: 1.4px;
}
```
